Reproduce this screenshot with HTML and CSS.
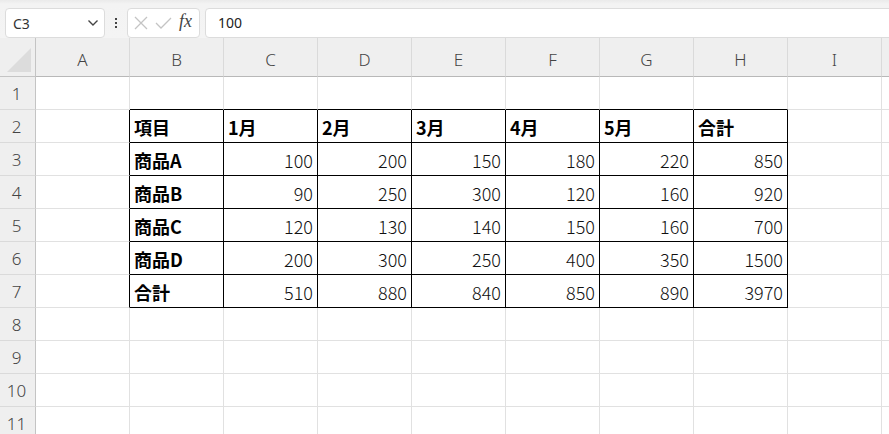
FILE: index.html
```html
<!DOCTYPE html>
<html lang="ja">
<head>
    <meta charset="UTF-8">
    <title>Sheet1</title>
    <link rel="stylesheet" href="styles.css">
</head>
<body>
    <!-- 数式バー -->
    <div class="toolbar">
        <div class="namebox">
            <span>C3</span>
            <svg width="12" height="8" viewBox="0 0 12 8"><path d="M1.5 1.5 L6 6 L10.5 1.5" fill="none" stroke="#444" stroke-width="1.4"/></svg>
        </div>
        <div class="dots"><i></i><i></i><i></i></div>
        <div class="fxbox">
            <svg width="14" height="14" viewBox="0 0 14 14"><path d="M1 1 L13 13 M13 1 L1 13" stroke="#c4c4c4" stroke-width="1.3"/></svg>
            <svg width="17" height="14" viewBox="0 0 17 14"><path d="M1 7 L6 12 L16 2" fill="none" stroke="#c4c4c4" stroke-width="1.3"/></svg>
            <span class="fx">fx</span>
        </div>
        <div class="formula">100</div>
    </div>

    <!-- シート -->
    <div class="sheet">
        <div class="corner"><svg width="26" height="26" viewBox="0 0 26 26"><path d="M25 1 L25 25 L1 25 Z" fill="#dcdcdc"/></svg></div>
        <div class="ch">A</div><div class="ch">B</div><div class="ch">C</div><div class="ch">D</div><div class="ch">E</div>
        <div class="ch">F</div><div class="ch">G</div><div class="ch">H</div><div class="ch">I</div><div class="ch"></div>

        <div class="rh">1</div>
        <div class="c"></div>
        <div class="c tt"></div><div class="c tt"></div><div class="c tt"></div><div class="c tt"></div>
        <div class="c tt"></div><div class="c tt"></div><div class="c tt"></div>
        <div class="c"></div><div class="c"></div>

        <div class="rh">2</div>
        <div class="c tl"></div>
        <div class="c tb lbl">項目</div><div class="c tb lbl">1月</div><div class="c tb lbl">2月</div><div class="c tb lbl">3月</div>
        <div class="c tb lbl">4月</div><div class="c tb lbl">5月</div><div class="c tb lbl">合計</div>
        <div class="c"></div><div class="c"></div>

        <div class="rh">3</div>
        <div class="c tl"></div>
        <div class="c tb lbl">商品A</div><div class="c tb num">100</div><div class="c tb num">200</div><div class="c tb num">150</div>
        <div class="c tb num">180</div><div class="c tb num">220</div><div class="c tb num">850</div>
        <div class="c"></div><div class="c"></div>

        <div class="rh">4</div>
        <div class="c tl"></div>
        <div class="c tb lbl">商品B</div><div class="c tb num">90</div><div class="c tb num">250</div><div class="c tb num">300</div>
        <div class="c tb num">120</div><div class="c tb num">160</div><div class="c tb num">920</div>
        <div class="c"></div><div class="c"></div>

        <div class="rh">5</div>
        <div class="c tl"></div>
        <div class="c tb lbl">商品C</div><div class="c tb num">120</div><div class="c tb num">130</div><div class="c tb num">140</div>
        <div class="c tb num">150</div><div class="c tb num">160</div><div class="c tb num">700</div>
        <div class="c"></div><div class="c"></div>

        <div class="rh">6</div>
        <div class="c tl"></div>
        <div class="c tb lbl">商品D</div><div class="c tb num">200</div><div class="c tb num">300</div><div class="c tb num">250</div>
        <div class="c tb num">400</div><div class="c tb num">350</div><div class="c tb num">1500</div>
        <div class="c"></div><div class="c"></div>

        <div class="rh">7</div>
        <div class="c tl"></div>
        <div class="c tb lbl">合計</div><div class="c tb num">510</div><div class="c tb num">880</div><div class="c tb num">840</div>
        <div class="c tb num">850</div><div class="c tb num">890</div><div class="c tb num">3970</div>
        <div class="c"></div><div class="c"></div>

        <div class="rh">8</div>
        <div class="c"></div><div class="c"></div><div class="c"></div><div class="c"></div><div class="c"></div>
        <div class="c"></div><div class="c"></div><div class="c"></div><div class="c"></div><div class="c"></div>

        <div class="rh">9</div>
        <div class="c"></div><div class="c"></div><div class="c"></div><div class="c"></div><div class="c"></div>
        <div class="c"></div><div class="c"></div><div class="c"></div><div class="c"></div><div class="c"></div>

        <div class="rh">10</div>
        <div class="c"></div><div class="c"></div><div class="c"></div><div class="c"></div><div class="c"></div>
        <div class="c"></div><div class="c"></div><div class="c"></div><div class="c"></div><div class="c"></div>

        <div class="rh">11</div>
        <div class="c"></div><div class="c"></div><div class="c"></div><div class="c"></div><div class="c"></div>
        <div class="c"></div><div class="c"></div><div class="c"></div><div class="c"></div><div class="c"></div>
    </div>
</body>
</html>
```

FILE: styles.css
```css
body {
    margin: 0;
    width: 889px;
    height: 434px;
    overflow: hidden;
    background: #fff;
    font-family: "Noto Sans", "Noto Sans CJK JP", sans-serif;
}
.toolbar {
    display: flex;
    align-items: flex-end;
    height: 38px;
    padding: 0 0 0 5px;
    box-sizing: border-box;
    background: linear-gradient(#eaeaea 0, #f3f3f3 4px, #f4f4f4 100%);
}
.namebox {
    width: 100px;
    height: 30px;
    box-sizing: border-box;
    display: flex;
    align-items: center;
    justify-content: space-between;
    padding: 0 5px 0 7px;
    background: #fff;
    border: 1px solid #dcdcdc;
    border-radius: 4px;
    font-size: 14px;
    color: #333;
}
.dots {
    width: 22px;
    height: 30px;
    display: flex;
    flex-direction: column;
    align-items: center;
    justify-content: center;
    gap: 2px;
}
.dots i {
    width: 2px;
    height: 2px;
    background: #444;
}
.fxbox {
    width: 73px;
    height: 30px;
    box-sizing: border-box;
    display: flex;
    align-items: center;
    gap: 7px;
    padding: 0 0 0 6px;
    background: #fff;
    border: 1px solid #dcdcdc;
    border-radius: 4px;
}
.fx {
    font-family: "Liberation Serif", serif;
    font-style: italic;
    font-size: 18px;
    color: #444;
    margin-top: -3px;
}
.formula {
    flex: 1;
    height: 30px;
    box-sizing: border-box;
    margin-left: 5px;
    margin-right: -6px;
    padding: 4px 0 0 12px;
    background: #fff;
    border: 1px solid #dcdcdc;
    border-radius: 4px 0 0 4px;
    font-size: 14px;
    color: #222;
}
.sheet {
    display: grid;
    grid-template-columns: 36px repeat(10, 94px);
    grid-template-rows: 39px;
    grid-auto-rows: 33px;
}
.sheet > div {
    box-sizing: border-box;
}
.corner {
    background: #efefef;
    border-right: 1px solid #c4c4c4;
    border-bottom: 1px solid #c4c4c4;
    display: flex;
    align-items: flex-end;
    justify-content: flex-end;
    padding: 0 3px 3px 0;
}
.ch {
    background: #efefef;
    border-right: 1px solid #dadada;
    border-bottom: 1px solid #b8b8b8;
    display: flex;
    align-items: center;
    justify-content: center;
    padding-top: 5px;
    font-size: 17px;
    font-weight: 300;
    color: #444;
}
.rh {
    background: #efefef;
    border-right: 1px solid #c4c4c4;
    border-bottom: 1px solid #dadada;
    display: flex;
    align-items: center;
    justify-content: center;
    padding: 1px 2px 0 0;
    font-size: 17px;
    font-weight: 300;
    color: #444;
}
.c {
    border-right: 1px solid #e1e1e1;
    border-bottom: 1px solid #e1e1e1;
    display: flex;
    align-items: center;
    padding: 1px 4px 0 4px;
    font-family: "Noto Sans CJK JP", sans-serif;
    font-size: 18px;
    color: #111;
    white-space: nowrap;
}
.tt {
    border-bottom-color: #000;
}
.tl {
    border-right-color: #000;
}
.tb {
    border-right-color: #000;
    border-bottom-color: #000;
}
.lbl {
    font-weight: 700;
    color: #000;
}
.num {
    font-weight: 300;
    justify-content: flex-end;
}
```
